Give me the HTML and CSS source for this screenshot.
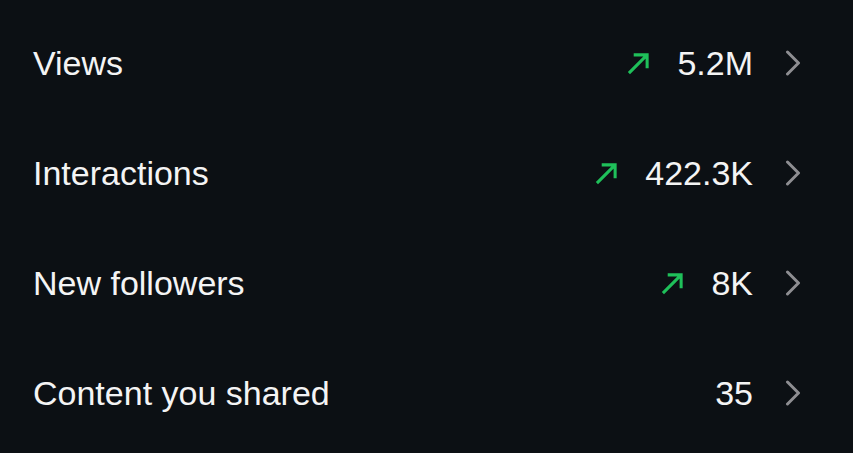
FILE: index.html
```html
<!DOCTYPE html>
<html lang="en">

<head>
    <meta charset="UTF-8">
    <meta name="viewport" content="width=device-width, initial-scale=1.0">
    <title>Insights</title>
    <link rel="stylesheet" href="styles.css">
</head>

<body>
    <div class="stats-list">
        <!-- Views -->
        <div class="stat-row">
            <div class="stat-label">Views</div>
            <div class="stat-right">
                <svg class="trend" viewBox="0 0 24 24"><path d="M2 22L21 3M7 3h14v14"/></svg>
                <span class="stat-value">5.2M</span>
                <svg class="chevron" viewBox="0 0 16 26"><path d="M2.5 2l11 11-11 11"/></svg>
            </div>
        </div>
        <div class="stat-row">
            <div class="stat-label">Interactions</div>
            <div class="stat-right">
                <svg class="trend" viewBox="0 0 24 24"><path d="M2 22L21 3M7 3h14v14"/></svg>
                <span class="stat-value">422.3K</span>
                <svg class="chevron" viewBox="0 0 16 26"><path d="M2.5 2l11 11-11 11"/></svg>
            </div>
        </div>
        <div class="stat-row">
            <div class="stat-label">New followers</div>
            <div class="stat-right">
                <svg class="trend" viewBox="0 0 24 24"><path d="M2 22L21 3M7 3h14v14"/></svg>
                <span class="stat-value">8K</span>
                <svg class="chevron" viewBox="0 0 16 26"><path d="M2.5 2l11 11-11 11"/></svg>
            </div>
        </div>
        <div class="stat-row">
            <div class="stat-label">Content you shared</div>
            <div class="stat-right">
                <span class="stat-value">35</span>
                <svg class="chevron" viewBox="0 0 16 26"><path d="M2.5 2l11 11-11 11"/></svg>
            </div>
        </div>
    </div>
</body>

</html>
```

FILE: styles.css
```css
* {
    margin: 0;
    padding: 0;
    box-sizing: border-box;
    font-family: "Liberation Sans", Arial, sans-serif;
}

body {
    background-color: #0c1014;
    min-height: 100vh;
    color: #f4f4f4;
}

.stats-list {
    padding: 8px 52px 0 33px;
    display: flex;
    flex-direction: column;
}

.stat-row {
    height: 110px;
    display: flex;
    align-items: center;
    justify-content: space-between;
}

.stat-label {
    font-size: 34px;
}

.stat-right {
    display: flex;
    align-items: center;
}

.stat-value {
    font-size: 34px;
    margin-right: 32px;
}

.trend {
    width: 23px;
    height: 23px;
    margin-right: 27px;
    fill: none;
    stroke: #1fc05a;
    stroke-width: 3.2;
}

.chevron {
    width: 16px;
    height: 26px;
    fill: none;
    stroke: #8e8e92;
    stroke-width: 3;
    stroke-linecap: round;
    stroke-linejoin: round;
}
```
